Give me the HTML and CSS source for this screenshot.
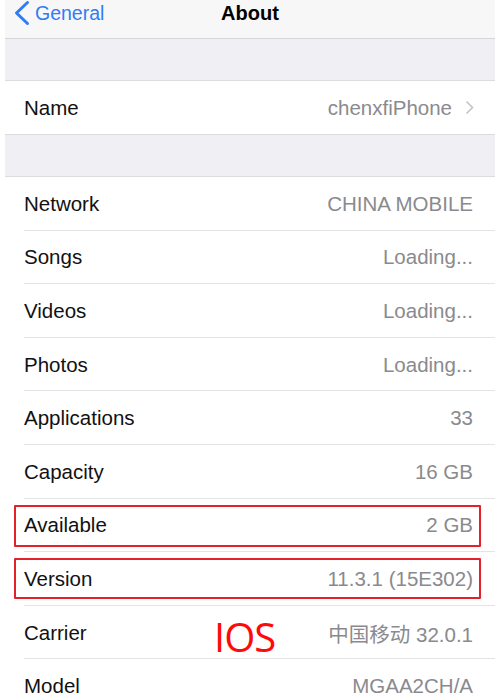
FILE: index.html
```html
<!DOCTYPE html>
<html>
<head>
<meta charset="utf-8">
<link rel="stylesheet" href="styles.css">
</head>
<body>
<div class="screen">
  <header class="navbar">
    <div class="back">
      <svg class="chev" width="18" height="26" viewBox="0 0 18 26"><path d="M14.5 2.5 L3.5 13 L14.5 23.5" fill="none" stroke="#2f7cf6" stroke-width="3" stroke-linecap="round" stroke-linejoin="round"/></svg>
      <span>General</span>
    </div>
    <div class="title">About</div>
  </header>
  <div class="gap gap-top"></div>
  <div class="group">
    <div class="row name-row"><span class="label">Name</span><span class="value">chenxfiPhone<svg class="disc" width="9" height="15" viewBox="0 0 9 15"><path d="M1.5 1.5 L7.5 7.5 L1.5 13.5" fill="none" stroke="#c4c4c8" stroke-width="1.6"/></svg></span></div>
  </div>
  <div class="gap gap-mid"></div>
  <div class="group list">
    <div class="row"><span class="label">Network</span><span class="value">CHINA MOBILE</span></div>
    <div class="row"><span class="label">Songs</span><span class="value">Loading...</span></div>
    <div class="row"><span class="label">Videos</span><span class="value">Loading...</span></div>
    <div class="row"><span class="label">Photos</span><span class="value">Loading...</span></div>
    <div class="row"><span class="label">Applications</span><span class="value">33</span></div>
    <div class="row"><span class="label">Capacity</span><span class="value">16 GB</span></div>
    <div class="row marked mark-a"><span class="label">Available</span><span class="value">2 GB</span></div>
    <div class="row marked mark-b"><span class="label">Version</span><span class="value">11.3.1 (15E302)</span></div>
    <div class="row carrier"><span class="label">Carrier</span><span class="ios">IOS</span><span class="value">中国移动 32.0.1</span></div>
    <div class="row"><span class="label">Model</span><span class="value">MGAA2CH/A</span></div>
  </div>
</div>
</body>
</html>
```
FILE: styles.css
```css
html, body {
  margin: 0;
  padding: 0;
  background: #ffffff;
}
body {
  width: 500px;
  height: 700px;
  overflow: hidden;
  font-family: "Liberation Sans", Arial, "Noto Sans CJK SC", sans-serif;
}
.screen {
  margin: 0 5px;
  background: #ffffff;
}
.navbar {
  height: 38px;
  background: #f7f7f8;
  border-bottom: 1px solid #d6d6d8;
  position: relative;
  display: flex;
  align-items: center;
}
.back {
  display: flex;
  align-items: center;
  gap: 4px;
  padding-left: 8px;
  margin-top: -12px;
  color: #2f7cf6;
  font-size: 19.5px;
}
.title {
  position: absolute;
  left: 0;
  right: 0;
  top: 2px;
  text-align: center;
  font-weight: bold;
  font-size: 20px;
  color: #000;
}
.gap {
  background: #efeff4;
}
.gap-top {
  height: 41px;
  border-bottom: 1px solid #dcdcdf;
}
.gap-mid {
  height: 41px;
  border-top: 1px solid #dcdcdf;
  border-bottom: 1px solid #dcdcdf;
}
.row {
  height: 53.6px;
  display: flex;
  align-items: center;
  justify-content: space-between;
  padding: 0 22px 0 19px;
  position: relative;
  font-size: 20.5px;
}
.name-row {
  height: 53px;
}
.list .row::before {
  content: "";
  position: absolute;
  left: 19px;
  right: 0;
  bottom: 0;
  border-bottom: 1px solid #e4e4e6;
}
.list .row:last-child::before {
  display: none;
}
.label {
  color: #111111;
}
.value {
  color: #8a8a8e;
  display: flex;
  align-items: center;
  gap: 13px;
}
.name-row .value {
  margin-right: -1px;
}
.marked::after {
  content: "";
  position: absolute;
  left: 9px;
  right: 14px;
  border: 2px solid #e4212b;
  border-radius: 1px;
}
.mark-a::after {
  top: 6px;
  height: 38px;
}
.mark-b::after {
  top: 6px;
  height: 37px;
}
.ios {
  position: absolute;
  left: 209px;
  top: 10px;
  color: #ff0a0a;
  font-family: "Open Sans", "Noto Sans", sans-serif;
  font-size: 40px;
  line-height: 42px;
  letter-spacing: -1px;
}
```
